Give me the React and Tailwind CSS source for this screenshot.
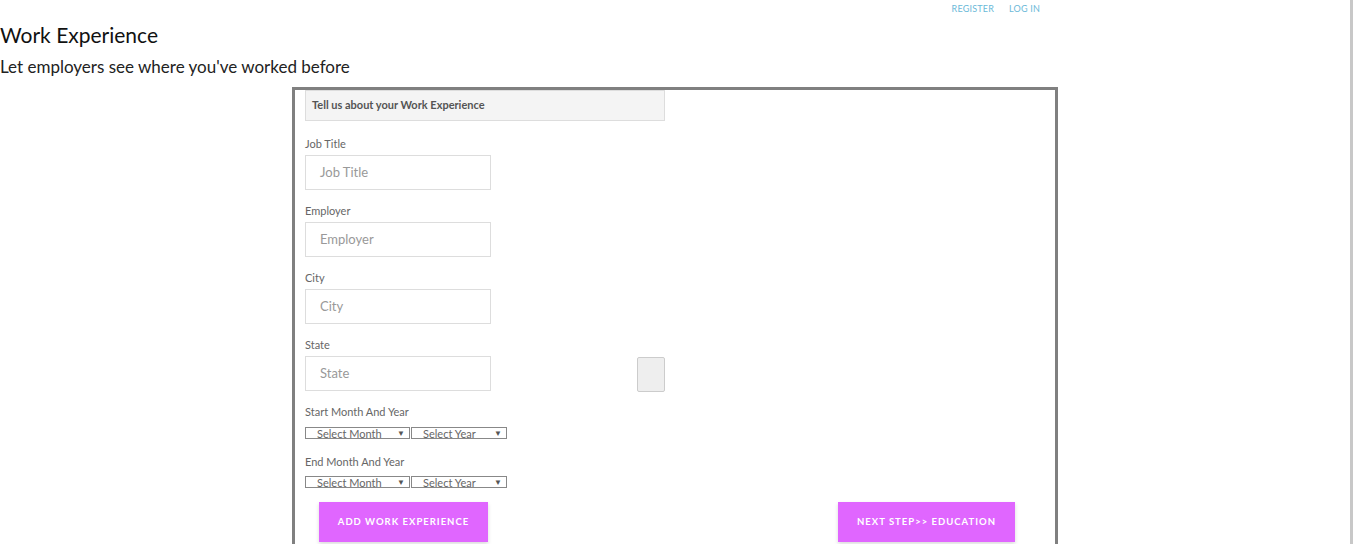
export default function App() {
  const fields = ["Job Title", "Employer", "City", "State"];

  const SelectBox = ({ label, width }) => (
    <div
      className={`${width} h-[12px] border border-[#888] flex items-center justify-between pl-[11px] pr-[4px] text-[11px] leading-none text-[#666]`}
    >
      <span>{label}</span>
      <span className="text-[8px] text-[#555]">▼</span>
    </div>
  );

  return (
    <div className="relative min-h-screen bg-white font-['Lato',sans-serif] text-[#222] overflow-hidden">
      {/* top nav */}
      <div className="w-[1040px] flex justify-end gap-[15px] pt-[2px] h-[20px] text-[9px] text-[#6bb9d8] tracking-[0.2px]">
        <span>REGISTER</span>
        <span>LOG IN</span>
      </div>

      <h1 className="text-[21px] leading-[30px] text-[#111]">Work Experience</h1>
      <p className="text-[17px] leading-[24px] mt-[5px] text-[#222]">
        Let employers see where you've worked before
      </p>

      <div className="ml-[292px] mt-[8px] w-[766px] h-[500px] border-[3px] border-[#808080] pl-[10px]">
        <div className="w-[360px] h-[31px] bg-[#f4f4f4] border border-[#ddd] flex items-center pl-[6px] text-[11px] font-bold text-[#555]">
          Tell us about your Work Experience
        </div>

        <div className="mt-[15px] flex">
          <div className="flex flex-col">
            {fields.map((f) => (
              <div key={f} className="mb-[13px]">
                <div className="h-[15px] leading-[15px] text-[11px] text-[#666] mb-[4px]">{f}</div>
                <div className="w-[186px] h-[35px] border border-[#ddd] flex items-center pl-[14px] text-[13px] text-[#999]">
                  {f}
                </div>
              </div>
            ))}
          </div>
          <div className="ml-[146px] mt-[221px] w-[28px] h-[35px] bg-[#eee] border border-[#ccc] rounded-[2px]" />
        </div>

        <div className="h-[15px] leading-[15px] text-[11px] text-[#666]">Start Month And Year</div>
        <div className="mt-[8px] flex gap-[1px]">
          <SelectBox label="Select Month" width="w-[105px]" />
          <SelectBox label="Select Year" width="w-[96px]" />
        </div>

        <div className="mt-[15px] h-[15px] leading-[15px] text-[11px] text-[#666]">End Month And Year</div>
        <div className="mt-[7px] flex gap-[1px]">
          <SelectBox label="Select Month" width="w-[105px]" />
          <SelectBox label="Select Year" width="w-[96px]" />
        </div>

        <div className="mt-[14px] flex justify-between pl-[14px] pr-[40px]">
          <button className="w-[169px] h-[40px] bg-[#e066ff] text-white text-[9.5px] font-bold tracking-[1px] shadow-[0_2px_4px_rgba(0,0,0,0.15)]">
            ADD WORK EXPERIENCE
          </button>
          <button className="w-[177px] h-[40px] bg-[#e066ff] text-white text-[9.5px] font-bold tracking-[1px] shadow-[0_2px_4px_rgba(0,0,0,0.15)]">
            NEXT STEP&gt;&gt; EDUCATION
          </button>
        </div>
      </div>

      {/* scrollbar edge */}
      <div className="absolute top-0 right-0 w-[3px] h-full bg-[#c8c8c8]" />
    </div>
  );
}
